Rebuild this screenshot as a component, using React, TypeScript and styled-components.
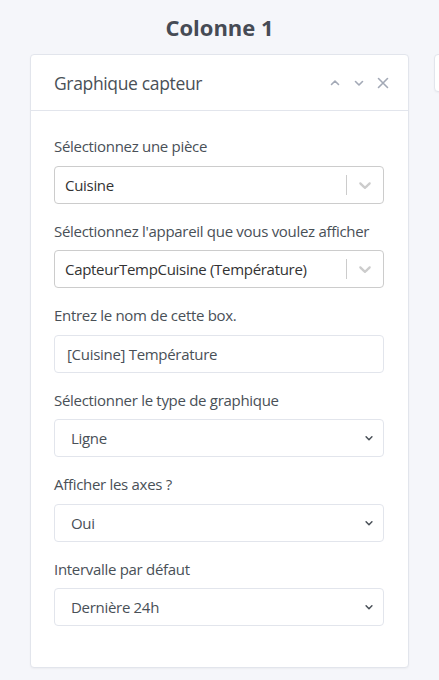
import React from "react";
import styled, { createGlobalStyle } from "styled-components";

const GlobalStyle = createGlobalStyle`
  html, body {
    margin: 0;
    padding: 0;
    background: #f5f6fa;
    font-family: "Open Sans", "Noto Sans", "Liberation Sans", sans-serif;
    color: #495057;
  }
`;

const Page = styled.div`
  display: flex;
  gap: 25px;
  padding: 0 0 0 30px;
  width: 439px;
  height: 680px;
  box-sizing: border-box;
  overflow: hidden;
`;

const Column = styled.div`
  flex: 0 0 379px;
  display: flex;
  flex-direction: column;
`;

const GhostColumn = styled.div`
  flex: 0 0 379px;
  padding-top: 54px;
`;

const ColumnTitle = styled.h2`
  margin: 0;
  height: 54px;
  line-height: 54px;
  text-align: center;
  font-size: 22px;
  font-weight: 700;
  color: #464b55;
`;

const Card = styled.div`
  background: #fff;
  border: 1px solid #e2e5ec;
  border-radius: 4px;
  box-shadow: 0 1px 2px rgba(0, 0, 0, 0.04);
`;

const GhostCard = styled(Card)`
  height: 36px;
`;

const CardHeader = styled.div`
  display: flex;
  align-items: center;
  justify-content: space-between;
  height: 55px;
  padding: 0 19px 0 23px;
  border-bottom: 1px solid #e2e5ec;
`;

const CardTitle = styled.h3`
  margin: 0;
  font-size: 17.5px;
  font-weight: 400;
  letter-spacing: -0.35px;
  color: #495057;
`;

const Tools = styled.div`
  display: flex;
  align-items: center;
  gap: 12px;
`;

const ToolButton = styled.button`
  display: flex;
  align-items: center;
  justify-content: center;
  width: 12px;
  height: 14px;
  padding: 0;
  border: 0;
  background: none;
  color: #a3a9b6;
`;

const CardBody = styled.div`
  padding: 24px 24px 25px 23px;
`;

const Group = styled.div`
  margin-bottom: 16px;
`;

const Label = styled.label`
  display: block;
  margin-bottom: 8px;
  font-size: 15px;
  line-height: 22.5px;
  letter-spacing: -0.3px;
  color: #495057;
`;

const ReactSelect = styled.div`
  display: flex;
  align-items: center;
  height: 38px;
  box-sizing: border-box;
  border: 1px solid #cccccc;
  border-radius: 4px;
  background: #fff;
`;

const ReactSelectValue = styled.div`
  flex: 1;
  padding-left: 10px;
  font-size: 15px;
  letter-spacing: -0.3px;
  color: #333;
  white-space: nowrap;
`;

const Separator = styled.span`
  align-self: stretch;
  width: 1px;
  margin: 8px 0;
  background: #cccccc;
`;

const Indicator = styled.span`
  display: flex;
  align-items: center;
  justify-content: center;
  width: 36px;
  color: #cccccc;
`;

const Input = styled.input`
  display: block;
  width: 100%;
  height: 38px;
  box-sizing: border-box;
  padding: 6px 12px;
  border: 1px solid #e2e5ec;
  border-radius: 4px;
  font-family: inherit;
  font-size: 15px;
  letter-spacing: -0.3px;
  color: #495057;
  outline: none;
`;

const SelectWrap = styled.div`
  position: relative;
`;

const NativeSelect = styled.select`
  display: block;
  width: 100%;
  height: 38px;
  box-sizing: border-box;
  padding: 6px 12px 6px 16px;
  border: 1px solid #e2e5ec;
  border-radius: 4px;
  background: #fff;
  font-family: inherit;
  font-size: 15px;
  letter-spacing: -0.3px;
  color: #495057;
  appearance: none;
  outline: none;
`;

const Caret = styled.span`
  position: absolute;
  right: 10px;
  top: 50%;
  transform: translateY(-50%);
  display: flex;
  color: #495057;
  pointer-events: none;
`;

const Chevron = ({ up = false, size = 12, sw = 1.6 }: { up?: boolean; size?: number; sw?: number }) => (
  <svg width={size} height={size} viewBox="0 0 12 12" fill="none" stroke="currentColor" strokeWidth={sw} strokeLinecap="round" strokeLinejoin="round">
    {up ? <path d="M2.5 7.5 L6 4 L9.5 7.5" /> : <path d="M2.5 4.5 L6 8 L9.5 4.5" />}
  </svg>
);

const Cross = () => (
  <svg width="12" height="12" viewBox="0 0 12 12" fill="none" stroke="currentColor" strokeWidth="1.6" strokeLinecap="round">
    <path d="M1.5 1.5 L10.5 10.5 M10.5 1.5 L1.5 10.5" />
  </svg>
);

const DropdownArrow = () => (
  <svg width="20" height="20" viewBox="0 0 20 20" fill="currentColor">
    <path d="M4.516 7.548c0.436-0.446 1.043-0.481 1.576 0l3.908 3.747 3.908-3.747c0.533-0.481 1.141-0.446 1.574 0 0.436 0.445 0.408 1.197 0 1.615-0.406 0.418-4.695 4.502-4.695 4.502-0.217 0.223-0.502 0.335-0.787 0.335s-0.57-0.112-0.789-0.335c0 0-4.287-4.084-4.695-4.502s-0.436-1.170 0-1.615z" />
  </svg>
);

const SearchSelect = ({ value }: { value: string }) => (
  <ReactSelect>
    <ReactSelectValue>{value}</ReactSelectValue>
    <Separator />
    <Indicator>
      <DropdownArrow />
    </Indicator>
  </ReactSelect>
);

const Select = ({ options }: { options: string[] }) => (
  <SelectWrap>
    <NativeSelect defaultValue={options[0]}>
      {options.map((o) => (
        <option key={o}>{o}</option>
      ))}
    </NativeSelect>
    <Caret>
      <Chevron size={10} sw={1.8} />
    </Caret>
  </SelectWrap>
);

export default function App() {
  return (
    <>
      <GlobalStyle />
      <Page>
        <Column>
          <ColumnTitle>Colonne 1</ColumnTitle>
          <Card>
            <CardHeader>
              <CardTitle>Graphique capteur</CardTitle>
              <Tools>
                <ToolButton>
                  <Chevron up />
                </ToolButton>
                <ToolButton>
                  <Chevron />
                </ToolButton>
                <ToolButton>
                  <Cross />
                </ToolButton>
              </Tools>
            </CardHeader>
            <CardBody>
              <Group>
                <Label>Sélectionnez une pièce</Label>
                <SearchSelect value="Cuisine" />
              </Group>
              <Group>
                <Label>Sélectionnez l'appareil que vous voulez afficher</Label>
                <SearchSelect value="CapteurTempCuisine (Température)" />
              </Group>
              <Group>
                <Label>Entrez le nom de cette box.</Label>
                <Input defaultValue="[Cuisine] Température" />
              </Group>
              <Group>
                <Label>Sélectionner le type de graphique</Label>
                <Select options={["Ligne", "Barres", "Aire"]} />
              </Group>
              <Group>
                <Label>Afficher les axes ?</Label>
                <Select options={["Oui", "Non"]} />
              </Group>
              <Group>
                <Label>Intervalle par défaut</Label>
                <Select options={["Dernière 24h", "Dernière semaine", "Dernier mois"]} />
              </Group>
            </CardBody>
          </Card>
        </Column>
        <GhostColumn>
          <GhostCard />
        </GhostColumn>
      </Page>
    </>
  );
}
